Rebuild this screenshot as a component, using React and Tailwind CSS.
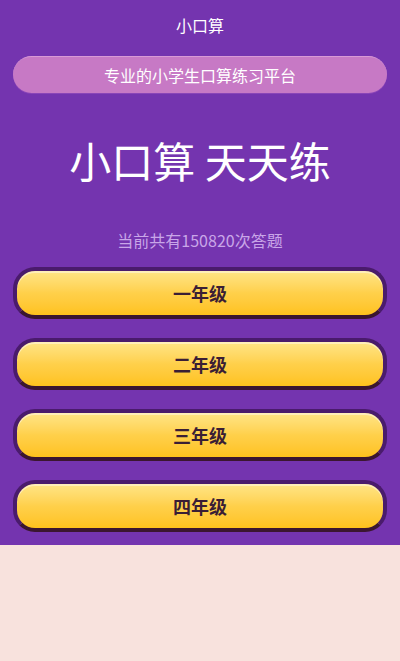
import React from 'react'

const grades = ['一年级', '二年级', '三年级', '四年级']

export default function App() {
  return (
    <div
      className="min-h-[661px] w-[400px] bg-[#F8E2DD]"
      style={{ fontFamily: '"Noto Sans CJK SC", "Noto Sans", sans-serif' }}
    >
      <div className="flex flex-col bg-[#7434AF] px-[13px] pb-[13px]">
        <div className="flex h-[50px] items-center justify-center text-[16px] text-white">小口算</div>

        <div className="mt-[6px] flex h-[37px] items-center justify-center rounded-full border-t border-[#D99AD6] bg-[#C779C5] text-[16px] text-white shadow-[0_1px_0_#8a45b8]">
          专业的小学生口算练习平台
        </div>

        <h1 className="mt-[47px] text-center text-[42px] leading-[40px] font-normal text-white">
          小口算&nbsp;天天练
        </h1>

        <p className="mt-[50px] text-center text-[16px] leading-[20px] text-[#C9A6E8]">当前共有150820次答题</p>

        <div className="mt-[17px] flex flex-col gap-[19px]">
          {grades.map((g) => (
            <button
              key={g}
              className="flex h-[52px] w-full items-center justify-center rounded-[22px] border-[4px] border-[#4A1B6C] border-b-[#3B1630] bg-gradient-to-b from-[#FFE585] via-[#FFD04A] to-[#FFC21B] text-[18px] font-bold text-[#3A1E35] shadow-[inset_0_2px_0_rgba(255,240,190,0.9)]"
            >
              {g}
            </button>
          ))}
        </div>
      </div>
    </div>
  )
}
